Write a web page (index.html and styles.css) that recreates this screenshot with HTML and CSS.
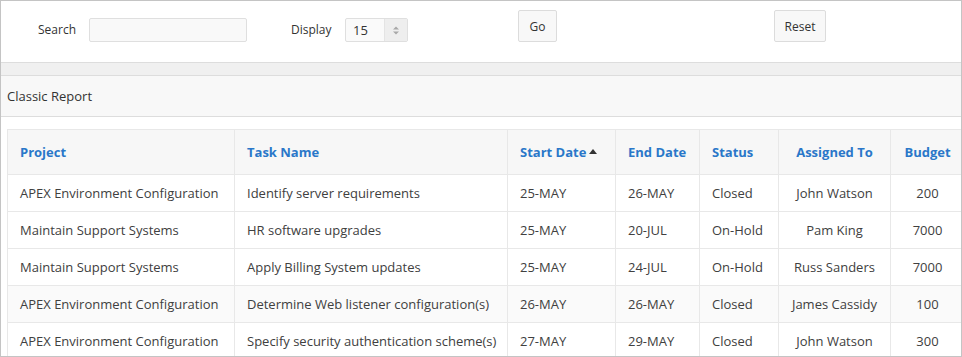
FILE: index.html
```html
<!DOCTYPE html>
<html lang="en">
<head>
    <meta charset="UTF-8">
    <title>Classic Report</title>
    <link rel="stylesheet" href="styles.css">
</head>
<body>
    <div class="frame">
        <div class="toolbar">
            <label class="label label-search">Search</label>
            <input type="text" class="search-input">
            <label class="label label-display">Display</label>
            <div class="select">
                <span class="select-value">15</span>
                <span class="select-arrow">
                    <svg width="6" height="9" viewBox="0 0 6 9"><path d="M0 3.5L3 0.5L6 3.5Z M0 5.5L3 8.5L6 5.5Z" fill="#a8a8a8"/></svg>
                </span>
            </div>
            <button class="btn btn-go">Go</button>
            <button class="btn btn-reset">Reset</button>
        </div>
        <div class="band"></div>
        <div class="region-header">Classic Report</div>
        <div class="region-body">
            <table class="report">
                <colgroup>
                    <col style="width: 227px">
                    <col style="width: 273px">
                    <col style="width: 108px">
                    <col style="width: 84px">
                    <col style="width: 79px">
                    <col style="width: 112px">
                    <col style="width: 74px">
                </colgroup>
                <thead>
                    <tr>
                        <th>Project</th>
                        <th>Task Name</th>
                        <th>Start Date<span class="sort-arrow"></span></th>
                        <th>End Date</th>
                        <th>Status</th>
                        <th class="center">Assigned To</th>
                        <th class="center">Budget</th>
                    </tr>
                </thead>
                <tbody>
                    <tr>
                        <td>APEX Environment Configuration</td>
                        <td>Identify server requirements</td>
                        <td>25-MAY</td>
                        <td>26-MAY</td>
                        <td>Closed</td>
                        <td class="center">John Watson</td>
                        <td class="center">200</td>
                    </tr>
                    <tr>
                        <td>Maintain Support Systems</td>
                        <td>HR software upgrades</td>
                        <td>25-MAY</td>
                        <td>20-JUL</td>
                        <td>On-Hold</td>
                        <td class="center">Pam King</td>
                        <td class="center">7000</td>
                    </tr>
                    <tr>
                        <td>Maintain Support Systems</td>
                        <td>Apply Billing System updates</td>
                        <td>25-MAY</td>
                        <td>24-JUL</td>
                        <td>On-Hold</td>
                        <td class="center">Russ Sanders</td>
                        <td class="center">7000</td>
                    </tr>
                    <tr class="hover">
                        <td>APEX Environment Configuration</td>
                        <td>Determine Web listener configuration(s)</td>
                        <td>26-MAY</td>
                        <td>26-MAY</td>
                        <td>Closed</td>
                        <td class="center">James Cassidy</td>
                        <td class="center">100</td>
                    </tr>
                    <tr>
                        <td>APEX Environment Configuration</td>
                        <td>Specify security authentication scheme(s)</td>
                        <td>27-MAY</td>
                        <td>29-MAY</td>
                        <td>Closed</td>
                        <td class="center">John Watson</td>
                        <td class="center">300</td>
                    </tr>
                </tbody>
            </table>
        </div>
    </div>
</body>
</html>
```

FILE: styles.css
```css
body {
    margin: 0;
    font-family: "Open Sans", Arial, sans-serif;
    font-size: 13px;
    color: #404040;
    background-color: #ffffff;
}
.frame {
    box-sizing: border-box;
    width: 962px;
    height: 357px;
    border: 1px solid #c4c4c4;
    overflow: hidden;
}
.toolbar {
    display: flex;
    align-items: flex-end;
    height: 32px;
    padding: 9px 0 20px 37px;
    border-bottom: 1px solid #dddddd;
}
.label {
    line-height: 24px;
    font-size: 12px;
    color: #333333;
}
.label-search {
    width: 51px;
}
.label-display {
    width: 54px;
}
.search-input {
    box-sizing: border-box;
    width: 158px;
    height: 24px;
    margin: 0 44px 0 0;
    border: 1px solid #dfdfdf;
    border-radius: 2px;
    background-color: #f9f9f9;
}
.select {
    box-sizing: border-box;
    display: flex;
    width: 63px;
    height: 24px;
    margin-right: 110px;
    border: 1px solid #dfdfdf;
    border-radius: 2px;
    background-color: #fafafa;
}
.select-value {
    flex: 1;
    padding-left: 7px;
    line-height: 22px;
    color: #333333;
}
.select-arrow {
    display: flex;
    align-items: center;
    justify-content: center;
    width: 22px;
    background-color: #eeeeee;
    border-left: 1px solid #e4e4e4;
}
.btn {
    box-sizing: border-box;
    height: 32px;
    padding: 0;
    border: 1px solid #dcdcdc;
    border-radius: 2px;
    background-color: #f8f8f8;
    font-family: inherit;
    font-size: 12px;
    color: #333333;
}
.btn-go {
    width: 39px;
    margin-right: 217px;
}
.btn-reset {
    width: 52px;
}
.band {
    height: 12px;
    background-color: #f0f0f0;
    border-bottom: 1px solid #dddddd;
}
.region-header {
    height: 40px;
    padding-left: 6px;
    line-height: 40px;
    font-size: 13px;
    color: #333333;
    background-color: #f8f8f8;
    border-bottom: 1px solid #dddddd;
}
.region-body {
    padding: 12px 0 0 6px;
}
.report {
    border-collapse: collapse;
    table-layout: fixed;
    width: 957px;
}
.report th,
.report td {
    border: 1px solid #e8e8e8;
    padding: 0 12px;
    text-align: left;
    white-space: nowrap;
}
.report th {
    height: 44px;
    background-color: #f7f7f7;
    color: #2a77c9;
    font-weight: bold;
}
.report td {
    height: 36px;
}
.report .center {
    text-align: center;
}
.report tr.hover td {
    background-color: #fafafa;
}
.sort-arrow {
    display: inline-block;
    width: 0;
    height: 0;
    margin-left: 3px;
    vertical-align: 3px;
    border-left: 4px solid transparent;
    border-right: 4px solid transparent;
    border-bottom: 5px solid #333333;
}
```
